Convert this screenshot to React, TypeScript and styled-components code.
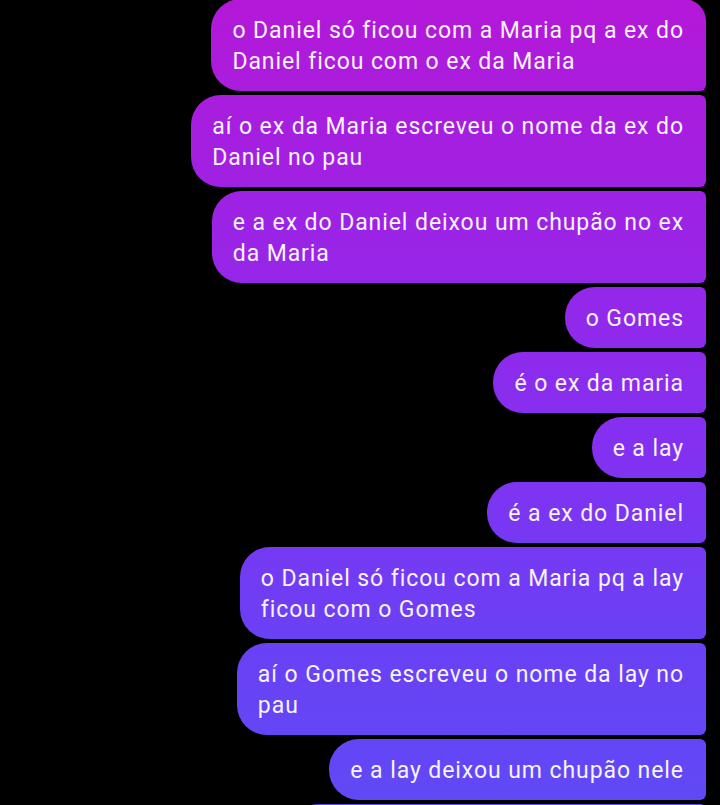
import React from "react";
import styled, { createGlobalStyle } from "styled-components";

const Global = createGlobalStyle`
  html, body {
    margin: 0;
    padding: 0;
    background: #000;
    overflow: hidden;
  }
  body {
    font-family: Roboto, "Noto Sans", "Liberation Sans", sans-serif;
  }
`;

const Thread = styled.div`
  display: flex;
  flex-direction: column;
  align-items: flex-end;
  gap: 4px;
  padding: 0 14px 0 0;
  margin-top: -1px;
  height: 806px;
  overflow: hidden;
  box-sizing: border-box;
`;

const Bubble = styled.div<{ $first?: boolean }>`
  max-width: 540px;
  padding: 16px 22px 14px 21px;
  font-size: 23px;
  line-height: 31px;
  letter-spacing: 0.92px;
  color: #f7f2ff;
  white-space: nowrap;
  background: linear-gradient(
    to bottom,
    #b418d8 0%,
    #9a24e6 30%,
    #8430f1 55%,
    #6b40f4 78%,
    #6049f6 100%
  );
  background-attachment: fixed;
  border-radius: 30px ${(p) => (p.$first ? "22px" : "6px")} 6px 30px;
  flex-shrink: 0;
`;

const messages: { lines: string[]; first?: boolean }[] = [
  { lines: ["o Daniel só ficou com a Maria pq a ex do", "Daniel ficou com o ex da Maria"], first: true },
  { lines: ["aí o ex da Maria escreveu o nome da ex do", "Daniel no pau"] },
  { lines: ["e a ex do Daniel deixou um chupão no ex", "da Maria"] },
  { lines: ["o Gomes"] },
  { lines: ["é o ex da maria"] },
  { lines: ["e a lay"] },
  { lines: ["é a ex do Daniel"] },
  { lines: ["o Daniel só ficou com a Maria pq a lay", "ficou com o Gomes"] },
  { lines: ["aí o Gomes escreveu o nome da lay no", "pau"] },
  { lines: ["e a lay deixou um chupão nele"] },
  { lines: ["e o Gomes ficou com a lay depois"] },
];

export default function App() {
  return (
    <>
      <Global />
      <Thread>
        {messages.map((m, i) => (
          <Bubble key={i} $first={m.first}>
            {m.lines.map((l, j) => (
              <React.Fragment key={j}>
                {j > 0 && <br />}
                {l}
              </React.Fragment>
            ))}
          </Bubble>
        ))}
      </Thread>
    </>
  );
}
